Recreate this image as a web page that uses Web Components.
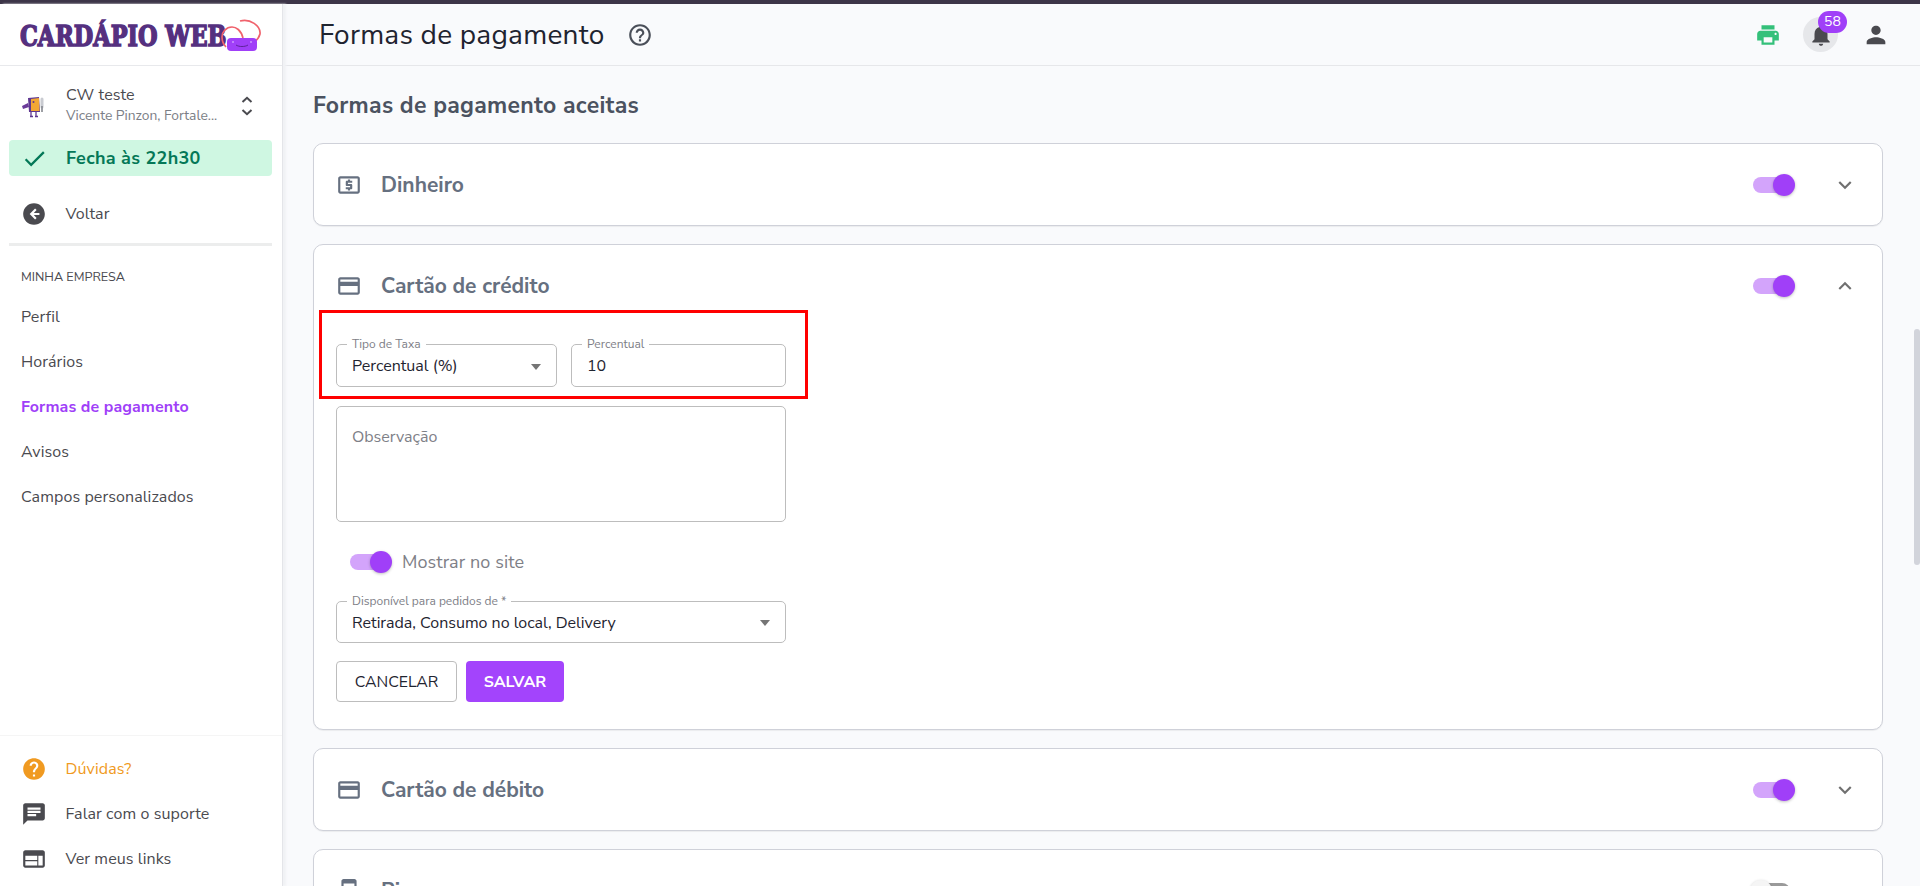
<!DOCTYPE html>
<html lang="pt-BR">
<head>
<meta charset="utf-8">
<title>Formas de pagamento</title>
<style>
  html, body { margin: 0; height: 100%; overflow: hidden; }
  body { font-family: "Nunito Sans", "Open Sans", "Noto Sans", sans-serif; color: #4b4b4f; background: #f9fafc; }
</style>
</head>
<body>
<app-shell>
  <side-bar slot="side"></side-bar>
  <top-bar slot="top" heading="Formas de pagamento"></top-bar>

  <section-title>Formas de pagamento aceitas</section-title>

  <pay-card label="Dinheiro" icon="cash"></pay-card>
  <pay-card label="Cartão de crédito" icon="card" open>
    <card-form></card-form>
  </pay-card>
  <pay-card label="Cartão de débito" icon="card"></pay-card>
  <pay-card label="Pix" icon="phone" off></pay-card>
</app-shell>

<script>
const ICONS = {
  cash: '<path d="M20 4H4c-1.100 0-2 .9-2 2v12c0 1.100.9 2 2 2h16c1.100 0 2-.9 2-2V6c0-1.100-.9-2-2-2zm0 14H4V6h16v12z"/><path d="M11 17h2v-1h1c.55 0 1-.45 1-1v-3c0-.55-.45-1-1-1h-3v-1h4V8h-2V7h-2v1h-1c-.55 0-1 .45-1 1v3c0 .55.45 1 1 1h3v1H9v2h2v1z"/>',
  card: '<path d="M20 4H4c-1.110 0-1.990.89-1.990 2L2 18c0 1.110.89 2 2 2h16c1.110 0 2-.89 2-2V6c0-1.110-.89-2-2-2zm0 14H4v-6h16v6zm0-10H4V6h16v2z"/>',
  phone: '<path d="M17 1H7C5.900 1 5 1.900 5 3v18c0 1.100.9 2 2 2h10c1.100 0 2-.9 2-2V3c0-1.100-.9-2-2-2zm0 18H7V5h10v14z"/>',
  down: '<path d="M7.410 8.590 12 13.170l4.590-4.580L18 10l-6 6-6-6z"/>',
  up: '<path d="M7.410 15.410 12 10.830l4.590 4.580L18 14l-6-6-6 6z"/>',
  help: '<path d="M11 18h2v-2h-2v2zm1-16C6.480 2 2 6.480 2 12s4.480 10 10 10 10-4.480 10-10S17.520 2 12 2zm0 18c-4.410 0-8-3.590-8-8s3.590-8 8-8 8 3.590 8 8-3.590 8-8 8zm0-14c-2.210 0-4 1.790-4 4h2c0-1.100.9-2 2-2s2 .9 2 2c0 2-3 1.750-3 5h2c0-2.250 3-2.500 3-5 0-2.210-1.790-4-4-4z"/>',
  print: '<path d="M19 8H5c-1.660 0-3 1.340-3 3v6h4v4h12v-4h4v-6c0-1.660-1.340-3-3-3zm-3 11H8v-5h8v5zm3-7c-.55 0-1-.45-1-1s.45-1 1-1 1 .45 1 1-.45 1-1 1zm-1-9H6v4h12V3z"/>',
  bell: '<path d="M12 22c1.100 0 2-.9 2-2h-4c0 1.100.9 2 2 2zm6-6v-5c0-3.070-1.630-5.640-4.500-6.320V4c0-.83-.67-1.500-1.500-1.500s-1.500.67-1.500 1.500v.68C7.640 5.360 6 7.920 6 11v5l-2 2v1h16v-1l-2-2z"/>',
  person: '<path d="M12 12c2.210 0 4-1.790 4-4s-1.790-4-4-4-4 1.790-4 4 1.790 4 4 4zm0 2c-2.670 0-8 1.340-8 4v2h16v-2c0-2.660-5.330-4-8-4z"/>',
  check: '<path d="M9 16.170 4.830 12l-1.420 1.410L9 19 21 7l-1.410-1.410z"/>',
  back: '<path d="M12 2C6.480 2 2 6.480 2 12s4.480 10 10 10 10-4.480 10-10S17.520 2 12 2zm1 15-5-5 5-5 1.410 1.410L11.830 11H17v2h-5.170l2.580 2.590L13 17z" fill-rule="evenodd"/>',
  question: '<path d="M12 2C6.480 2 2 6.480 2 12s4.480 10 10 10 10-4.480 10-10S17.520 2 12 2zm1 17h-2v-2h2v2zm2.070-7.750-.9.920C13.450 12.900 13 13.500 13 15h-2v-.5c0-1.100.45-2.100 1.170-2.830l1.240-1.260c.37-.36.590-.86.590-1.410 0-1.100-.9-2-2-2s-2 .9-2 2H8c0-2.210 1.790-4 4-4s4 1.790 4 4c0 .88-.36 1.680-.93 2.250z"/>',
  chat: '<path d="M20 2H4c-1.100 0-1.990.9-1.990 2L2 22l4-4h14c1.100 0 2-.9 2-2V4c0-1.100-.9-2-2-2zM6 9h12v2H6V9zm8 5H6v-2h8v2zm4-6H6V6h12v2z"/>',
  links: '<path d="M20 4H4c-1.100 0-1.990.9-1.990 2L2 18c0 1.100.9 2 2 2h16c1.100 0 2-.9 2-2V6c0-1.100-.9-2-2-2zm-5 14H4v-4h11v4zm0-5H4V9h11v4zm5 5h-4V9h4v9z"/>'
};

function icon(name, size) {
  return `<svg width="${size}" height="${size}" viewBox="0 0 24 24" fill="currentColor" aria-hidden="true">${ICONS[name]}</svg>`;
}

class AppShell extends HTMLElement {
  constructor() {
    super();
    this.attachShadow({ mode: 'open' });
    this.shadowRoot.innerHTML = `
      <style>
        :host { display: grid; grid-template-columns: 283px 1fr; grid-template-rows: 62px 1fr; height: 100vh; border-top: 4px solid #3d3548; box-sizing: border-box; position: relative; }
        ::slotted([slot=side]) { grid-row: 1 / 3; }
        main { overflow: hidden; padding: 25px 37px 0 30px; min-height: 0; }
        .thumb { position: absolute; right: 0; top: 325px; width: 6px; height: 236px; border-radius: 3px; background: #d2d4db; }
      </style>
      <slot name="side"></slot>
      <slot name="top"></slot>
      <main><slot></slot></main>
      <div class="thumb"></div>
    `;
  }
}

class SideBar extends HTMLElement {
  constructor() {
    super();
    this.attachShadow({ mode: 'open' });
    this.shadowRoot.innerHTML = `
      <style>
        :host { display: flex; flex-direction: column; background: #fff; border-right: 1px solid #e4e5e9; box-shadow: 3px 0 2px #f1f2f5; font-size: 16px; letter-spacing: .1px; min-height: 0; position: relative; z-index: 1; }
        .logo { height: 62px; box-sizing: border-box; flex: none; display: flex; align-items: center; padding-left: 20px; border-bottom: 1px solid #e8e9ec; position: relative; overflow: hidden; }
        .logo b { display: inline-block; white-space: nowrap; font: 700 27px/1 "DejaVu Serif", serif; color: #55307f; -webkit-text-stroke: 1.500px #55307f; letter-spacing: 0; transform-origin: left center; transform: scaleX(.83); margin-top: 4px; }
        .logo svg { position: absolute; left: 220px; top: 14px; }
        .store { display: grid; grid-template-columns: 45px 1fr 20px; align-items: center; padding: 19px 25px 14px 21px; }
        .store .name { color: #4a4a4f; line-height: 20px; }
        .store .addr { color: #7b7e86; font-size: 13.800px; line-height: 21px; white-space: nowrap; letter-spacing: 0; }
        .status { margin: 0 10px 0 9px; height: 36px; background: #cff7e2; border-radius: 4px; display: flex; align-items: center; padding-left: 12px; gap: 18px; color: #047857; font-weight: 700; font-size: 18px; letter-spacing: .3px; }
        .rule { height: 3px; background: #eceded; margin: 7px 10px 21px 9px; flex: none; }
        .heading { font-size: 12.600px; padding: 0 21px; line-height: 20px; color: #4a4a4f; margin-bottom: 7px; letter-spacing: 0; }
        .spacer { flex: 1; }
        .foot { border-top: 1px solid #f5f5f5; padding: 10px 0 0; height: 151px; box-sizing: border-box; flex: none; }
      </style>
      <div class="logo">
        <b>CARDÁPIO WEB</b>
        <svg width="44" height="40" viewBox="0 0 44 40" fill="none" stroke="#f0626c" stroke-width="1.700">
          <path d="M23 20C21 12 16 9 12 9 6 9 2 14 2 19c0 4 1 7 4 10"/>
          <path d="M20 3c10-3 21 5 20 13-1 4-4 7-7 9"/>
          <rect x="7" y="20" width="30" height="13" rx="4" fill="#a03ff8" stroke="none"/>
          <path d="M16 27c3 2 9 2 12 0" stroke="#4b1d82" stroke-width=".8"/>
          <circle cx="13" cy="24" r=".8" fill="#e9d5ff" stroke="none"/>
          <circle cx="31" cy="24" r=".8" fill="#e9d5ff" stroke="none"/>
        </svg>
      </div>
      <div class="store">
        <mascot-icon></mascot-icon>
        <div><div class="name">CW teste</div><div class="addr">Vicente Pinzon, Fortale...</div></div>
        <svg width="20" height="30" viewBox="0 0 20 30" fill="none" stroke="#4a4a4f" stroke-width="2"><path d="M5.500 11 10 6.800l4.500 4.200M5.500 19l4.500 4.200 4.500-4.200"/></svg>
      </div>
      <div class="status">${icon('check', 27)}<span>Fecha às 22h30</span></div>
      <nav-link icon="back" style="margin-top:15px">Voltar</nav-link>
      <div class="rule"></div>
      <div class="heading">MINHA EMPRESA</div>
      <nav-link plain>Perfil</nav-link>
      <nav-link plain>Horários</nav-link>
      <nav-link plain active>Formas de pagamento</nav-link>
      <nav-link plain>Avisos</nav-link>
      <nav-link plain>Campos personalizados</nav-link>
      <div class="spacer"></div>
      <div class="foot">
        <nav-link icon="question" tone="#f09a21">Dúvidas?</nav-link>
        <nav-link icon="chat">Falar com o suporte</nav-link>
        <nav-link icon="links">Ver meus links</nav-link>
      </div>
    `;
  }
}

class MascotIcon extends HTMLElement {
  constructor() {
    super();
    this.attachShadow({ mode: 'open' });
    this.shadowRoot.innerHTML = `
      <style>:host { display: block; width: 26px; height: 26px; }</style>
      <svg width="26" height="26" viewBox="0 0 26 26">
        <path d="M1 13l6-3 1 4-6 2z" fill="#6b3b99"/>
        <path d="M7 5l11-1 1 15H8z" fill="#5f3791"/>
        <path d="M10 6l8-1 .5 13H10z" fill="#f2a735"/>
        <circle cx="12.500" cy="9" r="1" fill="#5f3791"/>
        <path d="M21 6v8" stroke="#c9cbd1" stroke-width="3" stroke-linecap="round"/>
        <path d="M21 13v6" stroke="#85878e" stroke-width="1.600"/>
        <path d="M10 19v4M9 23.500h3M15 19v4M14 23.500h3" stroke="#5f3791" stroke-width="1.300" fill="none"/>
      </svg>
    `;
  }
}

class NavLink extends HTMLElement {
  constructor() {
    super();
    this.attachShadow({ mode: 'open' });
  }

  connectedCallback() {
    const name = this.getAttribute('icon');
    const plain = this.hasAttribute('plain');
    const active = this.hasAttribute('active');
    const tone = this.getAttribute('tone') || '#4a4a4f';
    this.shadowRoot.innerHTML = `
      <style>
        :host { display: flex; align-items: center; height: 45px; padding-left: 21px; gap: 18.500px; font-size: 16px; color: ${active ? '#a03ff8' : tone}; font-weight: ${active ? 700 : 400}; }
        svg { flex: none; }
      </style>
      ${plain ? '' : icon(name, 26)}
      <span><slot></slot></span>
    `;
  }
}

class TopBar extends HTMLElement {
  constructor() {
    super();
    this.attachShadow({ mode: 'open' });
    this.shadowRoot.innerHTML = `
      <style>
        :host { display: flex; align-items: center; height: 62px; box-sizing: border-box; padding: 0 30px 0 36px; border-bottom: 1px solid #e6e7ea; background: #f9fafc; color: #1f2430; }
        h1 { font-size: 28px; font-weight: 400; margin: 0; line-height: 1; letter-spacing: .25px; }
        .help { margin-left: 23px; color: #4a4f59; display: flex; }
        .right { margin-left: auto; display: flex; align-items: center; }
        .print { color: #34c07a; display: flex; margin-right: 22px; }
        .bell { width: 35px; height: 35px; border-radius: 50%; background: #e6e7ea; color: #4a4a4f; display: flex; align-items: center; justify-content: center; position: relative; margin-right: 24px; }
        .badge { position: absolute; left: 15px; top: -6px; min-width: 29px; height: 22px; border-radius: 11px; background: #a03ff8; color: #fff; font-size: 14px; line-height: 22px; text-align: center; }
        .person { color: #4a4a4f; display: flex; }
      </style>
      <h1>${this.getAttribute('heading')}</h1>
      <span class="help">${icon('help', 26)}</span>
      <div class="right">
        <span class="print">${icon('print', 26)}</span>
        <span class="bell">${icon('bell', 26)}<span class="badge">58</span></span>
        <span class="person">${icon('person', 28)}</span>
      </div>
    `;
  }
}

class SectionTitle extends HTMLElement {
  constructor() {
    super();
    this.attachShadow({ mode: 'open' });
    this.shadowRoot.innerHTML = `
      <style>:host { display: block; font-size: 23px; letter-spacing: .27px; font-weight: 700; color: #4b5260; line-height: 30px; margin-bottom: 22px; }</style>
      <slot></slot>
    `;
  }
}

class ToggleSwitch extends HTMLElement {
  constructor() {
    super();
    this.attachShadow({ mode: 'open' });
  }

  connectedCallback() {
    const off = this.hasAttribute('off');
    this.shadowRoot.innerHTML = `
      <style>
        :host { display: block; width: 42px; height: 22px; position: relative; flex: none; }
        .track { position: absolute; left: 0; top: 3px; width: 37px; height: 16px; border-radius: 8px; background: ${off ? '#9a9a9a' : '#d3a4fb'}; }
        .thumb { position: absolute; left: ${off ? '-3px' : '20px'}; top: 0; width: 22px; height: 22px; border-radius: 50%; background: ${off ? '#f5f5f5' : '#a03ff8'}; box-shadow: 0 1px 3px rgba(0,0,0,.25); }
      </style>
      <div class="track"></div><div class="thumb"></div>
    `;
  }
}

class PayCard extends HTMLElement {
  constructor() {
    super();
    this.attachShadow({ mode: 'open' });
  }

  connectedCallback() {
    const open = this.hasAttribute('open');
    this.shadowRoot.innerHTML = `
      <style>
        :host { display: block; background: #fff; border: 1px solid #cfd1d9; border-radius: 10px; margin-bottom: 18px; box-shadow: 0 1px 1px rgba(0,0,0,.06); }
        .head { display: flex; align-items: center; height: 81px; padding: 0 24px 0 22px; color: #667080; font-size: 21px; font-weight: 700; }
        .head .glyph { display: flex; margin-right: 19px; }
        .title { flex: 1; }
        .chev { display: flex; margin-left: 37px; color: #707070; }
      </style>
      <div class="head">
        <span class="glyph">${icon(this.getAttribute('icon'), 26)}</span>
        <span class="title">${this.getAttribute('label')}</span>
        <toggle-switch ${this.hasAttribute('off') ? 'off' : ''}></toggle-switch>
        <span class="chev">${icon(open ? 'up' : 'down', 26)}</span>
      </div>
      <slot></slot>
    `;
  }
}

class FieldBox extends HTMLElement {
  constructor() {
    super();
    this.attachShadow({ mode: 'open' });
  }

  connectedCallback() {
    const label = this.getAttribute('label');
    const caret = this.hasAttribute('caret');
    this.shadowRoot.innerHTML = `
      <style>
        :host { display: block; position: relative; box-sizing: border-box; height: 43px; border: 1px solid #bdbdbd; border-radius: 5px; background: #fff; font-size: 16px; color: #1f2430; }
        .value { display: flex; align-items: center; height: 100%; box-sizing: border-box; padding: 1px 0 0 15px; }
        legend { position: absolute; left: 10px; top: -7px; padding: 0 5px; background: #fff; font-size: 12px; line-height: 13px; color: #7e8087; white-space: nowrap; }
        i { position: absolute; right: 15px; top: 50%; margin-top: -2px; width: 0; height: 0; border: 5.500px solid transparent; border-top: 6px solid #757575; border-bottom: 0; }
      </style>
      ${label ? `<legend>${label}</legend>` : ''}
      <div class="value"><slot></slot></div>
      ${caret ? '<i></i>' : ''}
    `;
  }
}

class CardForm extends HTMLElement {
  constructor() {
    super();
    this.attachShadow({ mode: 'open' });
    this.shadowRoot.innerHTML = `
      <style>
        :host { display: block; padding: 18px 22px 27px; width: 450px; position: relative; }
        .row { display: grid; grid-template-columns: 221px 215px; gap: 14px; }
        .note { margin-top: 19px; box-sizing: border-box; height: 116px; border: 1px solid #bdbdbd; border-radius: 5px; padding: 20px 15px; font-size: 16px; line-height: 20px; color: #7e8087; }
        .show { display: flex; align-items: center; gap: 10px; margin: 28px 0 27px 14px; font-size: 18px; letter-spacing: .1px; color: #7e8087; height: 24px; }
        .wide { height: 42px; }
        .buttons { display: flex; gap: 9px; margin-top: 18px; }
        button { font: inherit; height: 41px; border-radius: 4px; cursor: pointer; padding: 0; }
        .ghost { width: 121px; background: #fff; border: 1px solid #bdbdbd; color: #1f2430; font-size: 15.800px; }
        .solid { width: 98px; background: #a344fc; border: 0; color: #fff; font-weight: 700; font-size: 16px; }
        .mark { position: absolute; left: 5px; top: -16px; width: 489px; height: 89px; box-sizing: border-box; border: 3px solid #ff0000; pointer-events: none; }
      </style>
      <div class="mark"></div>
      <div class="row">
        <field-box label="Tipo de Taxa" caret>Percentual (%)</field-box>
        <field-box label="Percentual">10</field-box>
      </div>
      <div class="note">Observação</div>
      <div class="show"><toggle-switch></toggle-switch><span>Mostrar no site</span></div>
      <field-box class="wide" label="Disponível para pedidos de *" caret>Retirada, Consumo no local, Delivery</field-box>
      <div class="buttons"><button class="ghost">CANCELAR</button><button class="solid">SALVAR</button></div>
    `;
  }
}

customElements.define('app-shell', AppShell);
customElements.define('side-bar', SideBar);
customElements.define('mascot-icon', MascotIcon);
customElements.define('nav-link', NavLink);
customElements.define('top-bar', TopBar);
customElements.define('section-title', SectionTitle);
customElements.define('toggle-switch', ToggleSwitch);
customElements.define('pay-card', PayCard);
customElements.define('field-box', FieldBox);
customElements.define('card-form', CardForm);
</script>
</body>
</html>
